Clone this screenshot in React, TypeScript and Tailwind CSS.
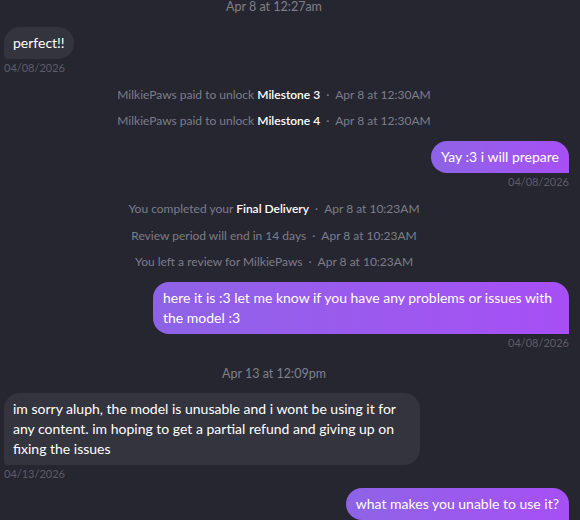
import React from 'react'

const font = { fontFamily: 'Lato, "Noto Sans", sans-serif' }

function Stamp({ children, className = '' }: { children: React.ReactNode; className?: string }) {
  return (
    <div className={`w-[540px] text-center text-[12.5px] leading-[14px] text-[#80808b] ${className}`}>
      {children}
    </div>
  )
}

function SystemLine({ before, bold, after, time, className = '' }: { before: string; bold?: string; after?: string; time: string; className?: string }) {
  return (
    <div className={`w-[540px] text-center text-[12px] leading-[18px] text-[#7d7d89] ${className}`}>
      {before}
      {bold && <span className="font-semibold text-white">{bold}</span>}
      {after}
      <span className="mx-[6px]">·</span>
      {time}
    </div>
  )
}

function Incoming({ text, date, className = '' }: { text: string; date: string; className?: string }) {
  return (
    <div className={`flex flex-col items-start ${className}`}>
      <div className="max-w-[416px] rounded-2xl rounded-bl-[4px] bg-[#34343e] px-[9px] py-1.5 text-[14px] leading-[20px] text-white">
        {text}
      </div>
      <div className="mt-[2px] text-[11px] leading-[14px] text-[#5c5c68]">{date}</div>
    </div>
  )
}

function Outgoing({ text, date, className = '' }: { text: string; date?: string; className?: string }) {
  return (
    <div className={`flex flex-col items-end ${className}`}>
      <div className="max-w-[416px] rounded-2xl rounded-br-none bg-gradient-to-r from-[#8d63e6] to-[#a74ff5] px-[10px] py-1.5 text-[14px] leading-[20px] text-white">
        {text}
      </div>
      {date && <div className="mt-[2px] text-[11px] leading-[14px] text-[#5c5c68]">{date}</div>}
    </div>
  )
}

export default function App() {
  return (
    <div className="h-[520px] w-[580px] overflow-hidden bg-[#262630] pl-1 pr-[11px]" style={font}>
      <Stamp>Apr 8 at 12:27am</Stamp>
      <Incoming className="mt-[13px]" text="perfect!!" date="04/08/2026" />
      <SystemLine className="mt-[11px]" before="MilkiePaws paid to unlock " bold="Milestone 3" time="Apr 8 at 12:30AM" />
      <SystemLine className="mt-[8px]" before="MilkiePaws paid to unlock " bold="Milestone 4" time="Apr 8 at 12:30AM" />
      <Outgoing className="mt-[11px]" text="Yay :3 i will prepare" date="04/08/2026" />
      <SystemLine className="mt-[11px]" before="You completed your " bold="Final Delivery" time="Apr 8 at 10:23AM" />
      <SystemLine className="mt-[9px]" before="Review period will end in 14 days" time="Apr 8 at 10:23AM" />
      <SystemLine className="mt-[8px]" before="You left a review for MilkiePaws" time="Apr 8 at 10:23AM" />
      <Outgoing
        className="mt-[11px]"
        text="here it is :3 let me know if you have any problems or issues with the model :3"
        date="04/08/2026"
      />
      <Stamp className="mt-[17px]">Apr 13 at 12:09pm</Stamp>
      <Incoming
        className="mt-[12px]"
        text="im sorry aluph, the model is unusable and i wont be using it for any content. im hoping to get a partial refund and giving up on fixing the issues"
        date="04/13/2026"
      />
      <Outgoing className="mt-[7px]" text="what makes you unable to use it?" />
    </div>
  )
}
